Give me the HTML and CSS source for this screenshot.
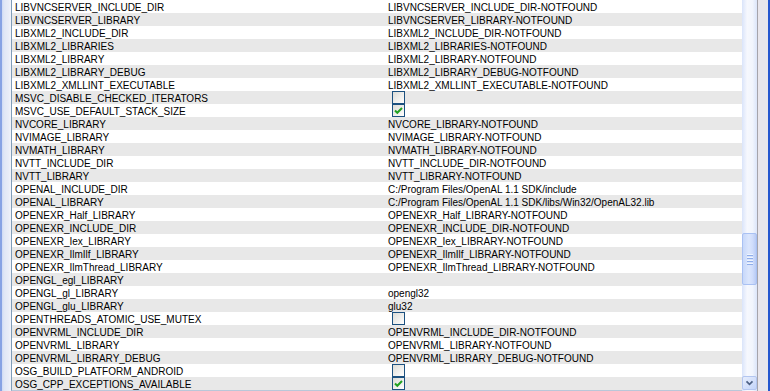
FILE: index.html
```html
<!DOCTYPE html>
<html lang="en">
<head>
  <meta charset="UTF-8" />
  <title>CMake cache</title>
  <link rel="stylesheet" href="styles.css">
</head>
<body>

<div class="window">
  <div class="frame-left"></div>

  <div class="cache-list">
    <div class="row"><span class="name">LIBVNCSERVER_INCLUDE_DIR</span><span class="value">LIBVNCSERVER_INCLUDE_DIR-NOTFOUND</span></div>
    <div class="row"><span class="name">LIBVNCSERVER_LIBRARY</span><span class="value">LIBVNCSERVER_LIBRARY-NOTFOUND</span></div>
    <div class="row"><span class="name">LIBXML2_INCLUDE_DIR</span><span class="value">LIBXML2_INCLUDE_DIR-NOTFOUND</span></div>
    <div class="row"><span class="name">LIBXML2_LIBRARIES</span><span class="value">LIBXML2_LIBRARIES-NOTFOUND</span></div>
    <div class="row"><span class="name">LIBXML2_LIBRARY</span><span class="value">LIBXML2_LIBRARY-NOTFOUND</span></div>
    <div class="row"><span class="name">LIBXML2_LIBRARY_DEBUG</span><span class="value">LIBXML2_LIBRARY_DEBUG-NOTFOUND</span></div>
    <div class="row"><span class="name">LIBXML2_XMLLINT_EXECUTABLE</span><span class="value">LIBXML2_XMLLINT_EXECUTABLE-NOTFOUND</span></div>
    <div class="row"><span class="name">MSVC_DISABLE_CHECKED_ITERATORS</span><span class="value"><span class="check"></span></span></div>
    <div class="row"><span class="name">MSVC_USE_DEFAULT_STACK_SIZE</span><span class="value"><span class="check on"><svg viewBox="0 0 11 11"><path d="M2 5.5 L4.3 7.8 L9 3"/></svg></span></span></div>
    <div class="row"><span class="name">NVCORE_LIBRARY</span><span class="value">NVCORE_LIBRARY-NOTFOUND</span></div>
    <div class="row"><span class="name">NVIMAGE_LIBRARY</span><span class="value">NVIMAGE_LIBRARY-NOTFOUND</span></div>
    <div class="row"><span class="name">NVMATH_LIBRARY</span><span class="value">NVMATH_LIBRARY-NOTFOUND</span></div>
    <div class="row"><span class="name">NVTT_INCLUDE_DIR</span><span class="value">NVTT_INCLUDE_DIR-NOTFOUND</span></div>
    <div class="row"><span class="name">NVTT_LIBRARY</span><span class="value">NVTT_LIBRARY-NOTFOUND</span></div>
    <div class="row"><span class="name">OPENAL_INCLUDE_DIR</span><span class="value">C:/Program Files/OpenAL 1.1 SDK/include</span></div>
    <div class="row"><span class="name">OPENAL_LIBRARY</span><span class="value">C:/Program Files/OpenAL 1.1 SDK/libs/Win32/OpenAL32.lib</span></div>
    <div class="row"><span class="name">OPENEXR_Half_LIBRARY</span><span class="value">OPENEXR_Half_LIBRARY-NOTFOUND</span></div>
    <div class="row"><span class="name">OPENEXR_INCLUDE_DIR</span><span class="value">OPENEXR_INCLUDE_DIR-NOTFOUND</span></div>
    <div class="row"><span class="name">OPENEXR_Iex_LIBRARY</span><span class="value">OPENEXR_Iex_LIBRARY-NOTFOUND</span></div>
    <div class="row"><span class="name">OPENEXR_IlmIlf_LIBRARY</span><span class="value">OPENEXR_IlmIlf_LIBRARY-NOTFOUND</span></div>
    <div class="row"><span class="name">OPENEXR_IlmThread_LIBRARY</span><span class="value">OPENEXR_IlmThread_LIBRARY-NOTFOUND</span></div>
    <div class="row"><span class="name">OPENGL_egl_LIBRARY</span><span class="value"></span></div>
    <div class="row"><span class="name">OPENGL_gl_LIBRARY</span><span class="value">opengl32</span></div>
    <div class="row"><span class="name">OPENGL_glu_LIBRARY</span><span class="value">glu32</span></div>
    <div class="row"><span class="name">OPENTHREADS_ATOMIC_USE_MUTEX</span><span class="value"><span class="check"></span></span></div>
    <div class="row"><span class="name">OPENVRML_INCLUDE_DIR</span><span class="value">OPENVRML_INCLUDE_DIR-NOTFOUND</span></div>
    <div class="row"><span class="name">OPENVRML_LIBRARY</span><span class="value">OPENVRML_LIBRARY-NOTFOUND</span></div>
    <div class="row"><span class="name">OPENVRML_LIBRARY_DEBUG</span><span class="value">OPENVRML_LIBRARY_DEBUG-NOTFOUND</span></div>
    <div class="row"><span class="name">OSG_BUILD_PLATFORM_ANDROID</span><span class="value"><span class="check"></span></span></div>
    <div class="row"><span class="name">OSG_CPP_EXCEPTIONS_AVAILABLE</span><span class="value"><span class="check on"><svg viewBox="0 0 11 11"><path d="M2 5.5 L4.3 7.8 L9 3"/></svg></span></span></div>
  </div>

  <div class="scrollbar">
    <div class="thumb">
      <span class="grip"></span>
      <span class="grip"></span>
      <span class="grip"></span>
      <span class="grip"></span>
    </div>
    <div class="arrow-down">
      <svg viewBox="0 0 15 14"><path d="M4 5 L7.5 8.5 L11 5"/></svg>
    </div>
  </div>

  <div class="frame-right"></div>
</div>

</body>
</html>
```

FILE: styles.css
```css
body, html {
  margin: 0;
  padding: 0;
  background: #ffffff;
}

.window {
  display: flex;
  width: 770px;
  height: 391px;
  overflow: hidden;
  font-family: "Liberation Sans", Arial, sans-serif;
  font-size: 10px;
  color: #000;
}

.frame-left {
  width: 11px;
  background: linear-gradient(to right, #86a2e4 0, #86a2e4 2px, #cdd9f4 2px, #dfe6f6 4px, #e9edf8 9px, #f3f5fb 11px);
}

.cache-list {
  width: 730px;
  border-left: 1px solid #7f9db9;
  border-bottom: 1px solid #b9c7d9;
  background: #fff;
}

.row {
  display: grid;
  grid-template-columns: 373px 1fr;
  height: 13px;
  line-height: 11px;
  padding-top: 2px;
  box-sizing: border-box;
  white-space: nowrap;
  overflow: hidden;
}

.row:nth-child(even) {
  background: #e8e8e8;
}

.name {
  padding-left: 3px;
}

.value {
  padding-left: 3px;
}

.check {
  display: block;
  width: 11px;
  height: 11px;
  margin: -2px 0 0 4px;
  border: 1px solid #1c5180;
  background: linear-gradient(135deg, #dcdcd7, #ffffff);
}

.check svg {
  display: block;
  width: 11px;
  height: 11px;
}

.check svg path {
  fill: none;
  stroke: #21a121;
  stroke-width: 2;
}

.scrollbar {
  width: 15px;
  display: flex;
  flex-direction: column;
  background: linear-gradient(to right, #dae4fa, #f6f8fe 35%, #f1f5fd 70%, #dbe5fa);
}

.thumb {
  margin-top: 233px;
  height: 52px;
  box-sizing: border-box;
  border: 1px solid #a9c1f3;
  border-radius: 2px;
  background: linear-gradient(to right, #c7d8fa, #dbe6fd 45%, #cfdcfb 75%, #b8cbf5);
  display: flex;
  flex-direction: column;
  align-items: center;
  justify-content: center;
  gap: 1px;
}

.grip {
  display: block;
  width: 6px;
  height: 1px;
  background: #eef4fe;
  border-bottom: 1px solid #8fadea;
}

.arrow-down {
  margin-top: auto;
  margin-bottom: 1px;
  height: 14px;
  box-sizing: border-box;
  border: 1px solid #b3c6f0;
  border-radius: 2px;
  background: linear-gradient(to bottom right, #e7eefd, #c3d4f9);
}

.arrow-down svg {
  display: block;
  width: 13px;
  height: 12px;
}

.arrow-down svg path {
  fill: none;
  stroke: #4d6185;
  stroke-width: 2;
}

.frame-right {
  width: 10px;
  border-left: 1px solid #a5a4ab;
  border-right: 2px solid #2556cf;
  background: #e8e6ec;
}
```
